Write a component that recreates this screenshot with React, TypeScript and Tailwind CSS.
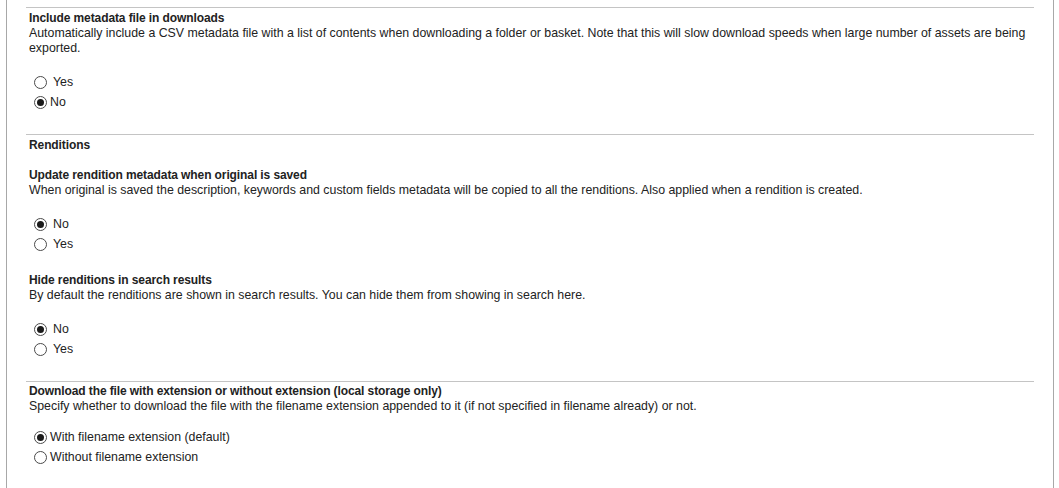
import React, { useState } from 'react'

interface Option {
  value: string
  label: string
  gap?: 'wide' | 'narrow'
}

function Radio({ checked, label, gap, onClick }: { checked: boolean; label: string; gap: 'wide' | 'narrow'; onClick: () => void }) {
  return (
    <label onClick={onClick} className="flex items-center h-[20px] cursor-pointer">
      <span className="ml-[5px] w-[13px] h-[13px] rounded-full border border-[#4a4a4a] bg-white flex items-center justify-center shrink-0">
        {checked && <span className="w-[7px] h-[7px] rounded-full bg-[#1a1a1a]" />}
      </span>
      <span className={gap === 'wide' ? 'ml-[6px]' : 'ml-[3px]'}>{label}</span>
    </label>
  )
}

function RadioGroup({ options, initial, className }: { options: Option[]; initial: string; className?: string }) {
  const [value, setValue] = useState(initial)
  return (
    <div className={className}>
      {options.map(o => (
        <Radio key={o.value} checked={value === o.value} label={o.label} gap={o.gap ?? 'wide'} onClick={() => setValue(o.value)} />
      ))}
    </div>
  )
}

const title = 'font-bold text-[12px] tracking-[-0.1px]'

export default function App() {
  return (
    <div className="bg-white min-h-[488px] text-[12.35px] leading-[15px] text-[#222]" style={{ fontFamily: '"Liberation Sans", Arial, sans-serif' }}>
      <div className="ml-[6px] w-[1048px] min-h-[488px] border-l border-r border-[#a8a8a8] pl-[19px] pr-[19px] pt-[7px]">
        {/* downloads */}
        <section className="border-t border-[#c4c4c4] pt-[3px] px-[3px] pb-[22px]">
          <div className={title}>Include metadata file in downloads</div>
          <div>
            Automatically include a CSV metadata file with a list of contents when downloading a folder or basket. Note that this will slow download speeds when large number of assets are being exported.
          </div>
          <RadioGroup
            className="mt-[16px]"
            initial="no"
            options={[
              { value: 'yes', label: 'Yes', gap: 'wide' },
              { value: 'no', label: 'No', gap: 'narrow' },
            ]}
          />
        </section>

        {/* renditions */}
        <section className="border-t border-[#c4c4c4] pt-[3px] px-[3px] pb-[22px]">
          <div className={title}>Renditions</div>

          <div className={`${title} mt-[15px]`}>Update rendition metadata when original is saved</div>
          <div>When original is saved the description, keywords and custom fields metadata will be copied to all the renditions. Also applied when a rendition is created.</div>
          <RadioGroup
            className="mt-[16px]"
            initial="no"
            options={[
              { value: 'no', label: 'No' },
              { value: 'yes', label: 'Yes' },
            ]}
          />

          <div className={`${title} mt-[19px]`}>Hide renditions in search results</div>
          <div>By default the renditions are shown in search results. You can hide them from showing in search here.</div>
          <RadioGroup
            className="mt-[16px]"
            initial="no"
            options={[
              { value: 'no', label: 'No' },
              { value: 'yes', label: 'Yes' },
            ]}
          />
        </section>

        {/* extension */}
        <section className="border-t border-[#c4c4c4] pt-[2px] px-[3px] pb-[20px]">
          <div className={title}>Download the file with extension or without extension (local storage only)</div>
          <div>Specify whether to download the file with the filename extension appended to it (if not specified in filename already) or not.</div>
          <RadioGroup
            className="mt-[13px]"
            initial="with"
            options={[
              { value: 'with', label: 'With filename extension (default)', gap: 'narrow' },
              { value: 'without', label: 'Without filename extension', gap: 'narrow' },
            ]}
          />
        </section>
      </div>
    </div>
  )
}
